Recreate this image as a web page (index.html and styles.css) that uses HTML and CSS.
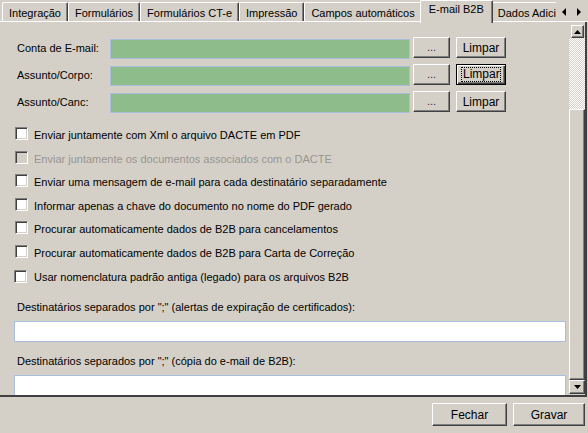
FILE: index.html
```html
<!DOCTYPE html>
<html lang="pt">
<head>
<meta charset="utf-8">
<title>E-mail B2B</title>
<link rel="stylesheet" href="styles.css">
</head>
<body>
<div class="window">
  <div class="tabbar">
    <div class="tabs">
      <div class="tab">Integração</div>
      <div class="tab">Formulários</div>
      <div class="tab">Formulários CT-e</div>
      <div class="tab">Impressão</div>
      <div class="tab">Campos automáticos</div>
      <div class="tab active">E-mail B2B</div>
      <div class="tab">Dados Adicionais</div>
    </div>
    <div class="tab-arrows">
      <svg class="arrow" width="5" height="8" viewBox="0 0 5 8"><path d="M4 0 L0 4 L4 8 Z" fill="#000"/></svg>
      <svg class="arrow" width="5" height="8" viewBox="0 0 5 8"><path d="M0 0 L4 4 L0 8 Z" fill="#000"/></svg>
    </div>
  </div>

  <div class="page">
    <div class="content">
      <div class="field-row">
        <span class="field-label">Conta de E-mail:</span>
        <div class="input green"></div>
        <button class="btn btn-dots">...</button>
        <button class="btn btn-clear">Limpar</button>
      </div>
      <div class="field-row">
        <span class="field-label">Assunto/Corpo:</span>
        <div class="input green"></div>
        <button class="btn btn-dots">...</button>
        <button class="btn btn-clear focused"><span class="focus-rect">Limpar</span></button>
      </div>
      <div class="field-row">
        <span class="field-label">Assunto/Canc:</span>
        <div class="input green"></div>
        <button class="btn btn-dots">...</button>
        <button class="btn btn-clear">Limpar</button>
      </div>

      <div class="checks">
        <div class="check-row"><span class="cb"></span><span class="cb-text">Enviar juntamente com Xml o arquivo DACTE em PDF</span></div>
        <div class="check-row disabled"><span class="cb"></span><span class="cb-text">Enviar juntamente os documentos associados com o DACTE</span></div>
        <div class="check-row"><span class="cb"></span><span class="cb-text">Enviar uma mensagem de e-mail para cada destinatário separadamente</span></div>
        <div class="check-row"><span class="cb"></span><span class="cb-text">Informar apenas a chave do documento no nome do PDF gerado</span></div>
        <div class="check-row"><span class="cb"></span><span class="cb-text">Procurar automaticamente dados de B2B para cancelamentos</span></div>
        <div class="check-row"><span class="cb"></span><span class="cb-text">Procurar automaticamente dados de B2B para Carta de Correção</span></div>
        <div class="check-row last"><span class="cb"></span><span class="cb-text">Usar nomenclatura padrão antiga (legado) para os arquivos B2B</span></div>
      </div>

      <div class="dest">
        <div class="dest-label">Destinatários separados por ";" (alertas de expiração de certificados):</div>
        <div class="input white"></div>
      </div>
      <div class="dest second">
        <div class="dest-label">Destinatários separados por ";" (cópia do e-mail de B2B):</div>
        <div class="input white"></div>
      </div>
    </div>

    <div class="vscroll">
      <div class="sb-btn sb-up">
        <svg width="7" height="4" viewBox="0 0 7 4"><path d="M3.5 0 L7 4 L0 4 Z" fill="#000"/></svg>
      </div>
      <div class="sb-track"></div>
      <div class="sb-thumb"></div>
      <div class="sb-btn sb-down">
        <svg width="7" height="4" viewBox="0 0 7 4"><path d="M0 0 L7 0 L3.5 4 Z" fill="#000"/></svg>
      </div>
    </div>
  </div>

  <div class="footer">
    <button class="btn btn-foot">Fechar</button>
    <button class="btn btn-foot gravar">Gravar</button>
  </div>
</div>
</body>
</html>
```

FILE: styles.css
```css
html, body {
  margin: 0;
  padding: 0;
}
body {
  background: #d4d0c8;
  font-family: "Liberation Sans", Arial, sans-serif;
  font-size: 11px;
  color: #000;
}
.window {
  width: 588px;
  height: 433px;
  display: flex;
  flex-direction: column;
  overflow: hidden;
}

/* ---------- tabs ---------- */
.tabbar {
  height: 22px;
  flex: none;
  display: flex;
  position: relative;
  box-sizing: border-box;
  border-bottom: 1px solid #fff;
}
.tabs {
  display: flex;
  align-items: flex-end;
  width: 556px;
  padding-left: 2px;
  box-sizing: border-box;
  overflow: hidden;
  height: 23px;
  flex: none;
}
.tab {
  height: 19px;
  box-sizing: border-box;
  padding: 4px 6px 0 6px;
  line-height: 13px;
  white-space: nowrap;
  border-top: 1px solid #fff;
  border-left: 1px solid #fff;
  border-right: 1px solid #404040;
  box-shadow: inset -1px 0 #808080;
  border-radius: 2px 2px 0 0;
  margin-bottom: 2px;
  flex: none;
}
.tab.active {
  height: 23px;
  margin: 0 -2px 0 -2px;
  padding: 2px 8px 0 8px;
  background: #d4d0c8;
  position: relative;
  z-index: 2;
}
.tab-arrows {
  flex: 1;
  display: flex;
  align-items: center;
  gap: 10px;
  padding-left: 6px;
  padding-top: 3px;
  background: #d4d0c8;
  height: 21px;
  box-sizing: border-box;
}
.arrow {
  display: block;
}

/* ---------- page ---------- */
.page {
  height: 375px;
  flex: none;
  display: flex;
  box-sizing: border-box;
  border-bottom: 2px solid #404040;
  border-right: 2px solid #404040;
  margin-right: 1px;
}
.content {
  width: 569px;
  flex: none;
  overflow: hidden;
  padding-top: 15px;
  box-sizing: border-box;
}
.field-row {
  display: flex;
  height: 22px;
  margin-bottom: 5px;
  padding-left: 17px;
}
.field-label {
  width: 93px;
  flex: none;
  line-height: 21px;
  padding-top: 1px;
}
.input {
  box-sizing: border-box;
  border: 1px solid #a7bfdc;
}
.input.green {
  width: 300px;
  height: 20px;
  margin-top: 2px;
  background: #8fbc8b;
}
.input.white {
  width: 552px;
  height: 21px;
  background: #fff;
}

.btn {
  font-family: "Liberation Sans", Arial, sans-serif;
  font-size: 11px;
  color: #000;
  background: #d4d0c8;
  border: 1px solid;
  border-color: #fff #404040 #404040 #fff;
  box-shadow: inset -1px -1px #808080;
  padding: 0;
  margin: 0;
  box-sizing: border-box;
  display: flex;
  align-items: center;
  justify-content: center;
}
.btn-dots {
  width: 37px;
  height: 21px;
  margin-left: 3px;
  color: #3a2a4a;
  padding-bottom: 2px;
}
.btn-clear {
  width: 50px;
  height: 21px;
  margin-left: 6px;
  font-size: 12px;
}
.btn-clear.focused {
  border: 1px solid #000;
  box-shadow: inset 1px 1px #fff, inset -1px -1px #404040, inset -2px -2px #808080;
}
.focus-rect {
  border: 1px dotted #000;
  padding: 0 1px;
  line-height: 13px;
  width: 40px;
  box-sizing: border-box;
  text-align: center;
}

/* ---------- checkboxes ---------- */
.checks {
  margin-top: 9px;
  padding-left: 15px;
}
.check-row {
  height: 23.5px;
  display: flex;
  align-items: center;
  gap: 6px;
}
.check-row.last {
  margin-top: 2px;
  margin-left: -1px;
  gap: 7px;
}
.cb {
  width: 13px;
  height: 13px;
  box-sizing: border-box;
  flex: none;
  background: #fff;
  border: 1px solid;
  border-color: #808080 #fff #fff #808080;
  box-shadow: inset 1px 1px #404040, inset -1px -1px #d4d0c8;
}
.cb-text {
  white-space: nowrap;
  margin-top: 3px;
}
.check-row.last .cb-text {
  margin-top: 0;
}
.check-row.disabled .cb {
  background: #d4d0c8;
}
.check-row.disabled .cb-text {
  color: #98958f;
}

/* ---------- destinatários ---------- */
.dest {
  margin-top: 12px;
  padding-left: 14px;
}
.dest.second {
  margin-top: 13px;
}
.dest-label {
  padding-left: 3px;
  line-height: 13px;
  margin-bottom: 7px;
}

/* ---------- scrollbar ---------- */
.vscroll {
  width: 16px;
  flex: none;
  display: flex;
  flex-direction: column;
  padding-top: 3px;
  box-sizing: border-box;
}
.sb-btn {
  height: 13px;
  flex: none;
  box-sizing: border-box;
  border: 1px solid;
  border-color: #fff #404040 #404040 #fff;
  box-shadow: inset -1px -1px #808080;
  display: flex;
  align-items: center;
  justify-content: center;
}
.sb-up {
  margin-left: 2px;
  width: 13px;
}
.sb-track {
  height: 71px;
  flex: none;
  background: repeating-conic-gradient(#fff 0 25%, #d4d0c8 0 50%) 0 0 / 2px 2px;
}
.sb-thumb {
  flex: 1;
  box-sizing: border-box;
  border: 1px solid;
  border-color: #fff #404040 #404040 #fff;
  box-shadow: inset -1px -1px #808080;
}
.sb-down {
  height: 14px;
  margin-bottom: 1px;
}

/* ---------- footer ---------- */
.footer {
  flex: 1;
  display: flex;
  justify-content: flex-end;
  align-items: flex-start;
  gap: 6px;
  padding-top: 6px;
  padding-right: 3px;
}
.btn-foot {
  width: 75px;
  height: 23px;
  font-size: 12px;
}
.btn-foot.gravar {
  width: 72px;
}
```
